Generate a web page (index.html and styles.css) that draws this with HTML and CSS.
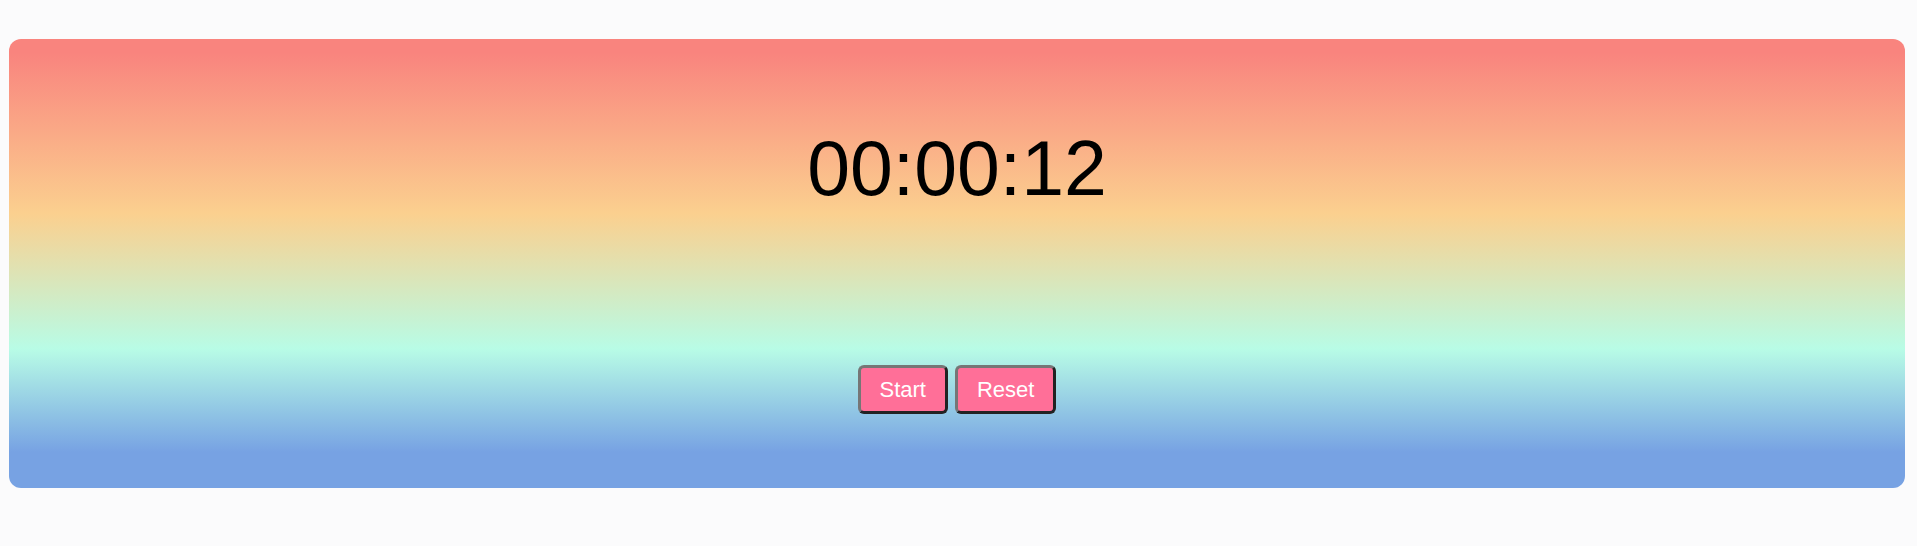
FILE: index.html
```html
<!DOCTYPE html>
<html lang="en">
<head>
<meta charset="utf-8">
<title>Stopwatch</title>
<link rel="stylesheet" href="styles.css">
</head>
<body>
  <main class="card">
    <div class="timer">00:00:12</div>
    <div class="controls">
      <button class="btn" type="button">Start</button>
      <button class="btn" type="button">Reset</button>
    </div>
  </main>
</body>
</html>
```

FILE: styles.css
```css
html, body {
  margin: 0;
  padding: 0;
  background: #fbfbfc;
}

body {
  padding: 39px 12px 0 9px;
}

.card {
  height: 449px;
  box-sizing: border-box;
  border-radius: 12px;
  background: linear-gradient(180deg,
    #f9847e 3%,
    #fbd08f 39%,
    #b8fce6 69%,
    #77a2e3 92%);
  display: flex;
  flex-direction: column;
  align-items: center;
  padding-top: 91px;
}

.timer {
  font-family: "Comic Sans MS", "Liberation Sans", Arial, sans-serif;
  font-size: 77px;
  line-height: 77px;
  color: #000;
}

.controls {
  display: flex;
  gap: 7px;
  margin-top: 158px;
}

.btn {
  font-family: "Liberation Sans", Arial, sans-serif;
  font-size: 22px;
  line-height: 25px;
  color: #fff;
  background: #ff6f98;
  padding: 9px 19px;
  border: 3px solid;
  border-color: #767676 #222 #222 #767676;
  border-radius: 6px;
  cursor: pointer;
}
```
